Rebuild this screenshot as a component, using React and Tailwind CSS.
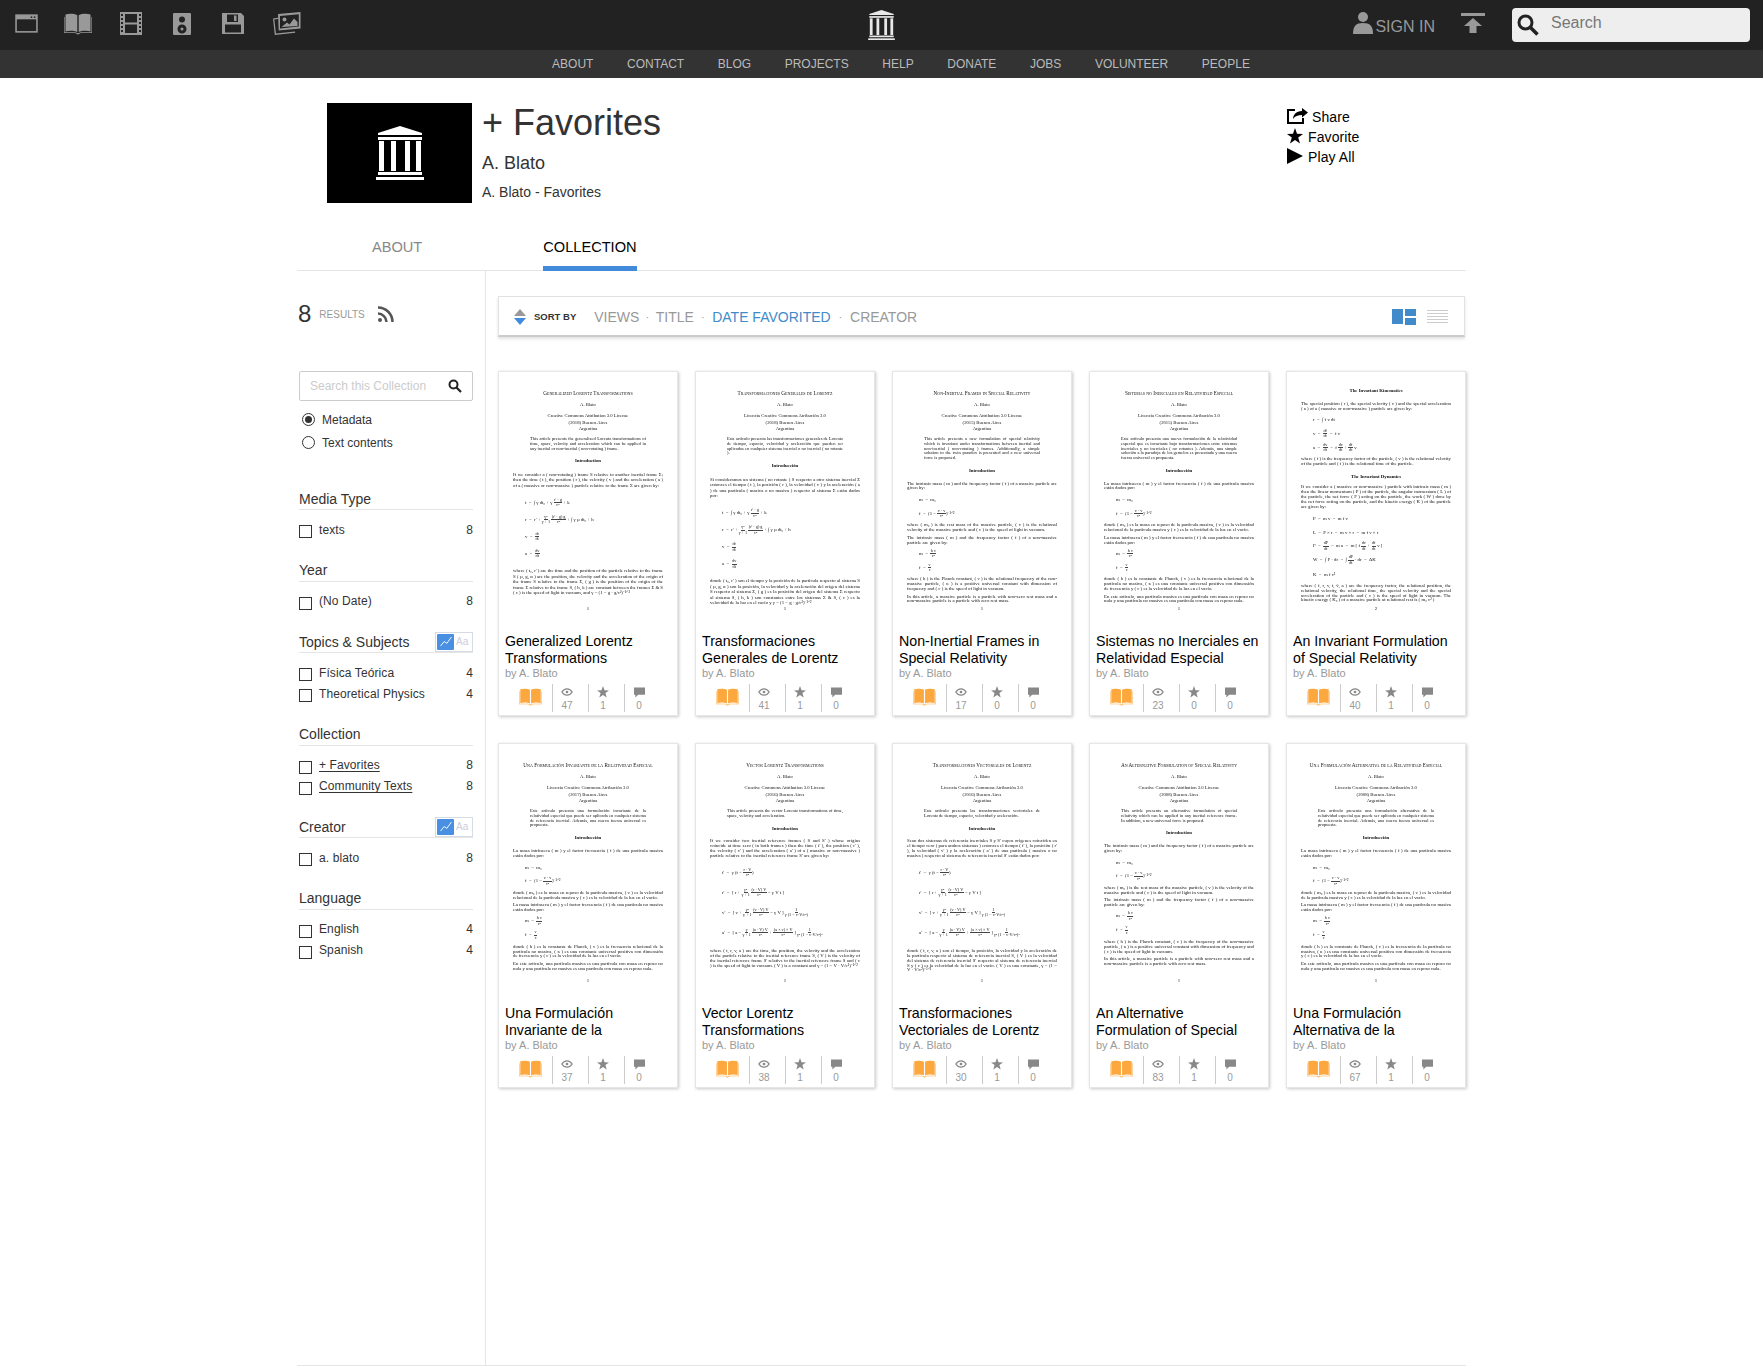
const NAV = ['ABOUT', 'CONTACT', 'BLOG', 'PROJECTS', 'HELP', 'DONATE', 'JOBS', 'VOLUNTEER', 'PEOPLE']

function Temple({ className }) {
  return (
    <svg viewBox="0 0 48 54" className={className} fill="currentColor">
      <polygon points="24,0 46,7 46,9 2,9 2,7" />
      <rect x="2" y="11" width="44" height="3" />
      <rect x="3" y="15" width="5" height="30" />
      <rect x="15" y="15" width="5" height="30" />
      <rect x="29" y="15" width="5" height="30" />
      <rect x="40" y="15" width="5" height="30" />
      <rect x="2" y="46" width="44" height="3" />
      <rect x="0" y="51" width="48" height="3" />
    </svg>
  )
}

function BookIcon({ className }) {
  return (
    <svg viewBox="0 0 28 22" className={className} fill="currentColor">
      <path d="M1.5 1.5C5 .5 10 .5 13.3 2.2V19C10 17.4 5 17.4 1.5 18.4Z" />
      <path d="M26.5 1.5C23 .5 18 .5 14.7 2.2V19C18 17.4 23 17.4 26.5 18.4Z" />
      <path d="M0 4v16h11c1 0 2 1.6 3 1.6s2-1.6 3-1.6h11V4h-.6v15.2H17c-1.2 0-2 1-3 1s-1.8-1-3-1H.6V4Z" />
    </svg>
  )
}

function MediaIcons() {
  return (
    <div className="flex items-center text-[#999]">
      <svg viewBox="0 0 22 18" className="ml-[15px] h-[19px] w-[23px]" fill="none" stroke="currentColor">
        <rect x="1" y="1" width="20" height="16" strokeWidth="1.5" />
        <rect x="1" y="1" width="20" height="4" fill="currentColor" stroke="none" />
        <rect x="15" y="2.2" width="1.5" height="1.5" fill="#222" stroke="none" />
        <rect x="18" y="2.2" width="1.5" height="1.5" fill="#222" stroke="none" />
      </svg>
      <BookIcon className="ml-[26px] h-[22px] w-[28px]" />
      <svg viewBox="0 0 22 23" className="ml-[28px] h-[23px] w-[22px]" fill="currentColor">
        <path fillRule="evenodd" d="M0 0h22v23H0ZM5 2v8.5h12V2ZM5 12.5V21h12v-8.5ZM1 2v2h2V2Zm0 4v2h2V6Zm0 4v2h2v-2Zm0 4v2h2v-2Zm0 4v2h2v-2Zm18-16v2h2V2Zm0 4v2h2V6Zm0 4v2h2v-2Zm0 4v2h2v-2Zm0 4v2h2v-2Z" />
      </svg>
      <svg viewBox="0 0 18 22" className="ml-[31px] h-[22px] w-[18px]" fill="currentColor">
        <path fillRule="evenodd" d="M1 0h16a1 1 0 0 1 1 1v20a1 1 0 0 1-1 1H1a1 1 0 0 1-1-1V1a1 1 0 0 1 1-1Zm8 3.5a3 3 0 1 0 0 6 3 3 0 0 0 0-6Zm0 8a4.5 4.5 0 1 0 0 9 4.5 4.5 0 0 0 0-9Zm0 3a1.5 1.5 0 1 1 0 3 1.5 1.5 0 0 1 0-3Z" />
      </svg>
      <svg viewBox="0 0 22 21" className="ml-[31px] h-[21px] w-[22px]" fill="currentColor">
        <path fillRule="evenodd" d="M0 0h19l3 3v18H0ZM5 1.5V9h11V1.5ZM12 2.5h2.5V8H12ZM3 11.5V19.5h16v-8Z" />
      </svg>
      <svg viewBox="0 0 28 23" className="ml-[29px] h-[23px] w-[28px]" fill="currentColor">
        <path d="M0 6.5 5 5.8V7L1.3 7.6 3 21.4l19-1.900.2 1.300L1.8 23Z" />
        <path fillRule="evenodd" d="M5 2 27.5 0v16.500L5.7 18.500ZM7 4v12.500l18.800-1.900V2.200Z" />
        <circle cx="11.5" cy="7.5" r="2" />
        <path d="M8.5 15 14 10.500 16.500 12.500 21 6.500 24.500 10v4Z" />
      </svg>
    </div>
  )
}

function Header() {
  return (
    <header>
      <div className="relative flex h-[50px] items-start bg-[#222]">
        <div className="pt-[12px]">
          <MediaIcons />
        </div>
        <div className="absolute left-[868px] top-[10px] text-[#e8e8e8]">
          <Temple className="h-[30px] w-[27px]" />
        </div>
        <div className="ml-auto flex items-start">
          <a className="mt-[12px] flex items-end text-[16px] leading-[20px] text-[#999]">
            <svg viewBox="0 0 20 22" className="h-[22px] w-[20px]" fill="currentColor">
              <circle cx="10" cy="5" r="5" />
              <path d="M0 22c0-8 3-11 10-11s10 3 10 11Z" />
            </svg>
            <span className="-mb-[2px] ml-[2px] leading-[18px]">SIGN IN</span>
          </a>
          <svg viewBox="0 0 24 20" className="ml-[26px] mt-[13px] h-[20px] w-[24px] text-[#999]" fill="currentColor">
            <rect width="24" height="3" />
            <path d="M12 5 21 13h-5.5v7h-7v-7H3Z" />
          </svg>
          <div className="ml-[27px] mr-[13px] mt-[8px] flex h-[34px] w-[238px] items-start rounded-[4px] bg-[#eee]">
            <svg viewBox="0 0 22 22" className="ml-[5px] mt-[6px] h-[22px] w-[22px] text-[#222]" fill="none" stroke="currentColor">
              <circle cx="8.5" cy="8.5" r="6.5" strokeWidth="3" />
              <path d="M13.5 13.5 20.5 20.5" strokeWidth="3.5" />
            </svg>
            <span className="ml-[12px] mt-[5px] text-[16px] leading-[20px] text-[#777]">Search</span>
          </div>
        </div>
      </div>
      <nav className="flex h-[28px] items-center justify-center gap-[33.6px] bg-[#333] pl-[39px] text-[12px] text-[#bbb]">
        {NAV.map((n) => (
          <a key={n}>{n}</a>
        ))}
      </nav>
    </header>
  )
}

function CollectionHead() {
  return (
    <section className="mx-[297px] mt-[25px] flex h-[100px]">
      <div className="ml-[30px] flex h-[100px] w-[145px] items-center justify-center bg-black text-white">
        <Temple className="h-[54px] w-[48px]" />
      </div>
      <div className="ml-[11px] w-[804px] text-[#333]">
        <h1 className="-ml-[1px] text-[36px] leading-[40px]">+ Favorites</h1>
        <p className="-ml-[1px] mt-[10px] text-[18px] leading-[20px]">A. Blato</p>
        <p className="-ml-[1px] mt-[10px] text-[14px] leading-[18px]">A. Blato - Favorites</p>
      </div>
      <div className="pt-[4px] text-[14px] leading-[20px] tracking-[0.1px] text-black">
        <div className="flex items-center">
          <svg viewBox="0 0 21 16" className="-mt-[3px] h-[16px] w-[21px]" fill="none" stroke="currentColor">
            <path d="M8 2H1v13h15v-5" strokeWidth="2" />
            <path d="M21 4.5 15 0v3C9 3 6 7 6 11c2-3 5-4 9-4v2.5Z" fill="currentColor" stroke="none" />
          </svg>
          <span className="ml-[4px]">Share</span>
        </div>
        <div className="flex items-center">
          <svg viewBox="0 0 16 16" className="-mt-[2px] h-[16px] w-[16px]" fill="currentColor">
            <polygon points="8,0 10,5.7 16,5.9 11.2,9.5 13,15.5 8,12 3,15.5 4.8,9.5 0,5.9 6,5.7" />
          </svg>
          <span className="ml-[5px]">Favorite</span>
        </div>
        <div className="flex items-center">
          <svg viewBox="0 0 16 16" className="-mt-[2px] h-[16px] w-[16px]" fill="currentColor">
            <polygon points="0,0 16,8 0,16" />
          </svg>
          <span className="ml-[5px]">Play All</span>
        </div>
      </div>
    </section>
  )
}

function Tabs() {
  return (
    <div className="mx-[297px] mt-[3px] flex h-[65px] items-end border-b border-[#e5e5e5]">
      <a className="ml-[75px] h-[33px] text-[14.6px] leading-[20px] text-[#888]">ABOUT</a>
      <a className="-mb-[1px] ml-[121px] h-[34px] border-b-[5px] border-[#428bdc] text-[14.6px] leading-[20px] text-black">
        COLLECTION
      </a>
    </div>
  )
}

function ChartToggle() {
  return (
    <div className="flex h-[20px] w-[38px] items-center border border-[#d5dce3] p-[1px]">
      <div className="flex h-[16px] w-[17px] items-center justify-center rounded-[1px] bg-[#4a90e2]">
        <svg viewBox="0 0 14 12" className="h-[11px] w-[14px]" fill="none" stroke="white" strokeWidth="1">
          <path d="M1 11 5 6 8 8 13 1" />
        </svg>
      </div>
      <span className="ml-[2px] text-[10px] text-[#ccd]">Aa</span>
    </div>
  )
}

const FACETS = [
  { name: 'Media Type', rows: [['texts', 8]] },
  { name: 'Year', rows: [['(No Date)', 8]] },
  { name: 'Topics & Subjects', toggle: true, rows: [['Física Teórica', 4], ['Theoretical Physics', 4]] },
  { name: 'Collection', link: true, rows: [['+ Favorites', 8], ['Community Texts', 8]] },
  { name: 'Creator', toggle: true, rows: [['a. blato', 8]] },
  { name: 'Language', rows: [['English', 4], ['Spanish', 4]] },
]

function Facet({ name, toggle, link, rows }) {
  return (
    <div className="mb-[19.5px]">
      <div className="flex h-[22px] items-center justify-between border-b border-[#e5e5e5] text-[14px] text-[#333]">
        <span className="pt-[1px]">{name}</span>
        {toggle && <ChartToggle />}
      </div>
      <ul className="pt-[9px] text-[12px] tracking-[0.1px] text-[#333]">
        {rows.map(([label, count]) => (
          <li key={label} className="flex h-[21px] items-center">
            <span className="mr-[7px] mt-[4px] h-[13px] w-[13px] border border-[#333]" />
            <span className={link ? 'underline underline-offset-2' : ''}>{label}</span>
            <span className="ml-auto">{count}</span>
          </li>
        ))}
      </ul>
    </div>
  )
}

function Sidebar() {
  return (
    <aside className="w-[189px] shrink-0 border-r border-[#e5e5e5] pl-[2px] pr-[12px]">
      <div className="mt-[29px] flex h-[28px] items-center text-[#333]">
        <span className="-ml-[1px] text-[24px]">8</span>
        <span className="ml-[8px] mt-[1px] text-[10px] text-[#999]">RESULTS</span>
        <svg viewBox="0 0 16 16" className="ml-[13px] h-[16px] w-[16px] text-[#555]" fill="none" stroke="currentColor" strokeWidth="2.5">
          <path d="M0 1.5C8 1.5 14.5 8 14.5 16" />
          <path d="M0 7.5C4.5 7.5 8.5 11.5 8.5 16" />
          <circle cx="2" cy="14" r="2" fill="currentColor" stroke="none" />
        </svg>
      </div>
      <div className="mt-[43px] flex h-[30px] items-center rounded-[2px] border border-[#ccc] px-[10px] text-[12px] text-[#ccc]">
        <span>Search this Collection</span>
        <svg viewBox="0 0 14 14" className="ml-auto h-[14px] w-[14px] text-[#222]" fill="none" stroke="currentColor">
          <circle cx="5.5" cy="5.5" r="4" strokeWidth="2" />
          <path d="M8.5 8.5 13 13" strokeWidth="2.2" />
        </svg>
      </div>
      <div className="mt-[7px] text-[12px] text-[#333]">
        <label className="flex h-[23px] items-center">
          <span className="ml-[3px] mr-[7px] flex h-[13px] w-[13px] items-center justify-center rounded-full border border-[#333]">
            <span className="h-[7px] w-[7px] rounded-full bg-[#333]" />
          </span>
          Metadata
        </label>
        <label className="flex h-[23px] items-center">
          <span className="ml-[3px] mr-[7px] h-[13px] w-[13px] rounded-full border border-[#333]" />
          Text contents
        </label>
      </div>
      <div className="mt-[34px]">
        {FACETS.map((f) => (
          <Facet key={f.name} {...f} />
        ))}
      </div>
    </aside>
  )
}

function SortBar() {
  return (
    <div className="mr-[1px] flex h-[41px] items-center border border-b-2 border-[#e2e2e2] border-b-[#ccc] pt-[2px] shadow-[0_2px_3px_rgba(0,0,0,0.12)]">
      <svg viewBox="0 0 12 16" className="ml-[15px] h-[16px] w-[12px]">
        <polygon points="6,0 12,7 0,7" fill="#999" />
        <polygon points="0,9 12,9 6,16" fill="#428bdc" />
      </svg>
      <span className="ml-[8px] text-[9.5px] font-bold text-[#333]">SORT BY</span>
      <div className="ml-[18px] flex items-center text-[14px] text-[#999]">
        <span>VIEWS</span>
        <span className="mx-[6.5px] text-[10px]">·</span>
        <span>TITLE</span>
        <span className="mx-[7.5px] text-[10px]">·</span>
        <span className="text-[#428bca]">DATE FAVORITED</span>
        <span className="mx-[8px] text-[10px]">·</span>
        <span>CREATOR</span>
      </div>
      <svg viewBox="0 0 24 16" className="ml-auto h-[16px] w-[24px]" fill="#428bca">
        <rect width="11" height="15" y="0" />
        <rect x="13" width="11" height="7" y="0" />
        <rect x="13" width="11" height="7" y="9" />
      </svg>
      <svg viewBox="0 0 21 14" className="ml-[11px] mr-[16px] h-[14px] w-[21px]" fill="#ccc">
        <rect width="21" height="1" y="0" />
        <rect width="21" height="1" y="3" />
        <rect width="21" height="1" y="6" />
        <rect width="21" height="1" y="9" />
        <rect width="21" height="1" y="12" />
      </svg>
    </div>
  )
}

// Front matter shared by most of the papers
const front = (title, license, year, abstract, heading = 'Introduction') => [
  ['t', title],
  ['au', 'A. Blato'],
  ['m0', license],
  ['m', year],
  ['m', 'Argentina'],
  ['a', abstract],
  ['h', heading],
]

const EN = 'Creative Commons Attribution 3.0 License'
const ES = 'Licencia Creative Commons Atribución 3.0'
const f = (n, d) => ({ n, d })

const massEqs = [
  ['e', ['m  =  m₀']],
  ['e', ['f  =  (1 − ', f('v · v', 'c²'), ')⁻¹ᐟ²']],
]
const photonEqs = [
  ['e', ['m  =  ', f('h ν', 'c²')]],
  ['e', ['f  =  ', f('ν', 'c')]],
]

const vectorEqs = [
  ['g'],
  ['E', ["t'  =  γ (t − ", f('r · V', 'c²'), ')']],
  ['E', ["r'  =  [ r + ", f('γ²', 'γ + 1'), ' ', f('(r · V) V', 'c²'), ' − γ V t ]']],
  ['E', ["v'  =  [ v + ", f('γ²', 'γ + 1'), ' ', f('(v · V) V', 'c²'), ' − γ V ] ', f('1', 'γ (1 − v·V/c²)')]],
  ['E', ["a'  =  [ a − ", f('γ', 'γ + 1'), ' ', f('(a · V) V', 'c²'), ' + ', f('(a × v) × V', 'c²'), ' ] ', f('1', 'γ² (1 − v·V/c²)³')]],
  ['g4'],
]

const lorentzEqs = [
  ['E2', ['t  =  ∫ γ dt₀ + γ ', f("r' · g", 'c²'), ' + k']],
  ['E2', ["r  =  r' + ", f('γ²', 'γ + 1'), ' ', f("(r' · g) g", 'c²'), ' + ∫ γ µ dt₀ + h']],
  ['E2', ['v  =  ', f('dr', 'dt')]],
  ['E2', ['a  =  ', f('dv', 'dt')]],
]

const DOCS = [
  [
    ...front(
      'Generalized Lorentz Transformations',
      EN,
      '(2018) Buenos Aires',
      'This article presents the generalized Lorentz transformations of time, space, velocity and acceleration which can be applied in any inertial or non-inertial ( non-rotating ) frame.',
    ),
    ['P', 'If we consider a ( non-rotating ) frame S relative to another inertial frame Σ; then the time ( t ), the position ( r ), the velocity ( v ) and the acceleration ( a ) of a ( massive or non-massive ) particle relative to the frame Σ are given by:'],
    ...lorentzEqs,
    ['Q', "where ( t₀, r' ) are the time and the position of the particle relative to the frame S ( µ, g, α ) are the position, the velocity and the acceleration of the origin of the frame S relative to the frame Σ, ( g ) is the position of the origin of the frame Σ relative to the frame S, ( h, k ) are constant between the frames Σ & S ( c ) is the speed of light in vacuum, and γ = (1 − g · g/c²)⁻¹ᐟ²"],
    ['n', '1'],
  ],
  [
    ...front(
      'Transformaciones Generales de Lorentz',
      ES,
      '(2018) Buenos Aires',
      'Este artículo presenta las transformaciones generales de Lorentz de tiempo, espacio, velocidad y aceleración que pueden ser aplicadas en cualquier sistema inercial o no inercial ( no rotante ).',
      'Introducción',
    ),
    ['P', 'Si consideramos un sistema ( no rotante ) S respecto a otro sistema inercial Σ entonces el tiempo ( t ), la posición ( r ), la velocidad ( v ) y la aceleración ( a ) de una partícula ( masiva o no masiva ) respecto al sistema Σ están dados por:'],
    ...lorentzEqs,
    ['Q', "donde ( t₀, r' ) son el tiempo y la posición de la partícula respecto al sistema S ( µ, g, α ) son la posición, la velocidad y la aceleración del origen del sistema S respecto al sistema Σ, ( g ) es la posición del origen del sistema Σ respecto al sistema S, ( h, k ) son constantes entre los sistemas Σ & S, ( c ) es la velocidad de la luz en el vacío y γ = (1 − g · g/c²)⁻¹ᐟ²"],
    ['n', '1'],
  ],
  [
    ...front(
      'Non-Inertial Frames in Special Relativity',
      EN,
      '(2015) Buenos Aires',
      'This article presents a new formulation of special relativity which is invariant under transformations between inertial and non-inertial ( non-rotating ) frames. Additionally, a simple solution to the twin paradox is presented and a new universal force is proposed.',
    ),
    ['p', 'The intrinsic mass ( m ) and the frequency factor ( f ) of a massive particle are given by:'],
    ...massEqs,
    ['p', 'where ( m₀ ) is the rest mass of the massive particle, ( v ) is the relational velocity of the massive particle and ( c ) is the speed of light in vacuum.'],
    ['q', 'The intrinsic mass ( m ) and the frequency factor ( f ) of a non-massive particle are given by:'],
    ...photonEqs,
    ['p', 'where ( h ) is the Planck constant, ( ν ) is the relational frequency of the non-massive particle, ( κ ) is a positive universal constant with dimension of frequency and ( c ) is the speed of light in vacuum.'],
    ['q', 'In this article, a massive particle is a particle with non-zero rest mass and a non-massive particle is a particle with zero rest mass.'],
    ['n', '1'],
  ],
  [
    ...front(
      'Sistemas no Inerciales en Relatividad Especial',
      ES,
      '(2015) Buenos Aires',
      'Este artículo presenta una nueva formulación de la relatividad especial que es invariante bajo transformaciones entre sistemas inerciales y no inerciales ( no rotantes ). Además, una simple solución a la paradoja de los gemelos es presentada y una nueva fuerza universal es propuesta.',
      'Introducción',
    ),
    ['p', 'La masa intrínseca ( m ) y el factor frecuencia ( f ) de una partícula masiva están dados por:'],
    ...massEqs,
    ['p', 'donde ( m₀ ) es la masa en reposo de la partícula masiva, ( v ) es la velocidad relacional de la partícula masiva y ( c ) es la velocidad de la luz en el vacío.'],
    ['q', 'La masa intrínseca ( m ) y el factor frecuencia ( f ) de una partícula no masiva están dados por:'],
    ...photonEqs,
    ['p', 'donde ( h ) es la constante de Planck, ( ν ) es la frecuencia relacional de la partícula no masiva, ( κ ) es una constante universal positiva con dimensión de frecuencia y ( c ) es la velocidad de la luz en el vacío.'],
    ['q', 'En este artículo, una partícula masiva es una partícula con masa en reposo no nula y una partícula no masiva es una partícula con masa en reposo nula.'],
    ['n', '1'],
  ],
  [
    ['h0', 'The Invariant Kinematics'],
    ['p', 'The special position ( r̄ ), the special velocity ( v̄ ) and the special acceleration ( ā ) of a ( massive or non-massive ) particle are given by:'],
    ['e', ['r̄  =  ∫ f v dt']],
    ['e', ['v̄  =  ', f('dr̄', 'dt'), '  =  f v']],
    ['e', ['ā  =  ', f('dv̄', 'dt'), '  =  f ', f('dv', 'dt'), ' + ', f('df', 'dt'), ' v']],
    ['p', 'where ( f ) is the frequency factor of the particle, ( v ) is the relational velocity of the particle and ( t ) is the relational time of the particle.'],
    ['h1', 'The Invariant Dynamics'],
    ['p', 'If we consider a ( massive or non-massive ) particle with intrinsic mass ( m ) then the linear momentum ( P ) of the particle, the angular momentum ( L ) of the particle, the net force ( F ) acting on the particle, the work ( W ) done by the net force acting on the particle, and the kinetic energy ( K ) of the particle are given by:'],
    ['e', ['P  =  m v̄  =  m f v']],
    ['e', ['L  =  P × r  =  m v̄ × r  =  m f v × r']],
    ['e', ['F  =  ', f('dP', 'dt'), '  =  m ā  =  m [ f ', f('dv', 'dt'), ' + ', f('df', 'dt'), ' v ]']],
    ['e', ['W  =  ∫ F · dr  =  ∫ ', f('dP', 'dt'), ' · dr  =  ΔK']],
    ['e', ['K  =  m f c²']],
    ['p', 'where ( f, r, v, t, v̄, ā ) are the frequency factor, the relational position, the relational velocity, the relational time, the special velocity and the special acceleration of the particle and ( c ) is the speed of light in vacuum. The kinetic energy ( K₀ ) of a massive particle at relational rest is ( m₀ c² )'],
    ['n', '2'],
  ],
  [
    ...front(
      'Una Formulación Invariante de la Relatividad Especial',
      ES,
      '(2017) Buenos Aires',
      'Este artículo presenta una formulación invariante de la relatividad especial que puede ser aplicada en cualquier sistema de referencia inercial. Además, una nueva fuerza universal es propuesta.',
      'Introducción',
    ),
    ['p', 'La masa intrínseca ( m ) y el factor frecuencia ( f ) de una partícula masiva están dados por:'],
    ...massEqs,
    ['p', 'donde ( m₀ ) es la masa en reposo de la partícula masiva, ( v ) es la velocidad relacional de la partícula masiva y ( c ) es la velocidad de la luz en el vacío.'],
    ['q', 'La masa intrínseca ( m ) y el factor frecuencia ( f ) de una partícula no masiva están dados por:'],
    ...photonEqs,
    ['p', 'donde ( h ) es la constante de Planck, ( ν ) es la frecuencia relacional de la partícula no masiva, ( κ ) es una constante universal positiva con dimensión de frecuencia y ( c ) es la velocidad de la luz en el vacío.'],
    ['q', 'En este artículo, una partícula masiva es una partícula con masa en reposo no nula y una partícula no masiva es una partícula con masa en reposo nula.'],
    ['n', '1'],
  ],
  [
    ...front(
      'Vector Lorentz Transformations',
      EN,
      '(2016) Buenos Aires',
      'This article presents the vector Lorentz transformations of time, space, velocity and acceleration.',
    ),
    ['p', "If we consider two inertial reference frames ( S and S' ) whose origins coincide at time zero ( in both frames ) then the time ( t' ), the position ( r' ), the velocity ( v' ) and the acceleration ( a' ) of a ( massive or non-massive ) particle relative to the inertial reference frame S' are given by:"],
    ...vectorEqs,
    ['p', "where ( t, r, v, a ) are the time, the position, the velocity and the acceleration of the particle relative to the inertial reference frame S, ( V ) is the velocity of the inertial reference frame S' relative to the inertial reference frame S and ( c ) is the speed of light in vacuum. ( V ) is a constant and γ = (1 − V · V/c²)⁻¹ᐟ²"],
    ['n', '1'],
  ],
  [
    ...front(
      'Transformaciones Vectoriales de Lorentz',
      ES,
      '(2016) Buenos Aires',
      'Este artículo presenta las transformaciones vectoriales de Lorentz de tiempo, espacio, velocidad y aceleración.',
      'Introducción',
    ),
    ['p', "Sean dos sistemas de referencia inerciales S y S' cuyos orígenes coinciden en el tiempo cero ( para ambos sistemas ) entonces el tiempo ( t' ), la posición ( r' ), la velocidad ( v' ) y la aceleración ( a' ) de una partícula ( masiva o no masiva ) respecto al sistema de referencia inercial S' están dados por:"],
    ...vectorEqs,
    ['p', "donde ( t, r, v, a ) son el tiempo, la posición, la velocidad y la aceleración de la partícula respecto al sistema de referencia inercial S, ( V ) es la velocidad del sistema de referencia inercial S' respecto al sistema de referencia inercial S y ( c ) es la velocidad de la luz en el vacío. ( V ) es una constante, γ = (1 − V · V/c²)⁻¹ᐟ²"],
    ['n', '1'],
  ],
  [
    ...front(
      'An Alternative Formulation of Special Relativity',
      EN,
      '(2008) Buenos Aires',
      'This article presents an alternative formulation of special relativity which can be applied in any inertial reference frame. In addition, a new universal force is proposed.',
    ),
    ['p', 'The intrinsic mass ( m ) and the frequency factor ( f ) of a massive particle are given by:'],
    ...massEqs,
    ['p', 'where ( m₀ ) is the rest mass of the massive particle, ( v ) is the velocity of the massive particle and ( c ) is the speed of light in vacuum.'],
    ['q', 'The intrinsic mass ( m ) and the frequency factor ( f ) of a non-massive particle are given by:'],
    ...photonEqs,
    ['p', 'where ( h ) is the Planck constant, ( ν ) is the frequency of the non-massive particle, ( κ ) is a positive universal constant with dimension of frequency and ( c ) is the speed of light in vacuum.'],
    ['q', 'In this article, a massive particle is a particle with non-zero rest mass and a non-massive particle is a particle with zero rest mass.'],
    ['n', '1'],
  ],
  [
    ...front(
      'Una Formulación Alternativa de la Relatividad Especial',
      ES,
      '(2008) Buenos Aires',
      'Este artículo presenta una formulación alternativa de la relatividad especial que puede ser aplicada en cualquier sistema de referencia inercial. Además, una nueva fuerza universal es propuesta.',
      'Introducción',
    ),
    ['p', 'La masa intrínseca ( m ) y el factor frecuencia ( f ) de una partícula masiva están dados por:'],
    ...massEqs,
    ['p', 'donde ( m₀ ) es la masa en reposo de la partícula masiva, ( v ) es la velocidad de la partícula masiva y ( c ) es la velocidad de la luz en el vacío.'],
    ['q', 'La masa intrínseca ( m ) y el factor frecuencia ( f ) de una partícula no masiva están dados por:'],
    ...photonEqs,
    ['p', 'donde ( h ) es la constante de Planck, ( ν ) es la frecuencia de la partícula no masiva, ( κ ) es una constante universal positiva con dimensión de frecuencia y ( c ) es la velocidad de la luz en el vacío.'],
    ['q', 'En este artículo, una partícula masiva es una partícula con masa en reposo no nula y una partícula no masiva es una partícula con masa en reposo nula.'],
    ['n', '1'],
  ],
]

const BLOCK = {
  t: 'mt-[18px] text-center text-[5.2px] leading-[6px] whitespace-nowrap [font-variant-caps:small-caps]',
  au: 'mt-[6px] text-center text-[4.7px] leading-[6px]',
  m0: 'mt-[5px] text-center text-[4.7px] leading-[6px]',
  m: 'mt-[0.5px] text-center text-[4.7px] leading-[6px]',
  a: 'mt-[5px] px-[17px] text-justify text-[4.5px] leading-[4.8px]',
  h: 'mb-[3.6px] mt-[7px] text-center font-bold leading-[6px]',
  h0: 'mb-[3.6px] mt-[16px] text-center font-bold leading-[6px]',
  h1: 'mb-[1px] mt-[7px] text-center font-bold leading-[6px]',
  p: 'mt-[4px] text-justify leading-[4.9px]',
  q: 'mt-[2.4px] text-justify leading-[4.9px]',
  P: 'mb-[6px] mt-[4px] text-justify leading-[5.5px]',
  Q: 'mt-[6px] text-justify leading-[5.5px]',
  e: 'mt-[3px] flex h-[11px] items-center pl-[12px]',
  E: 'mt-[3.5px] flex h-[16.5px] items-center pl-[12px]',
  E2: 'flex h-[17px] items-center pl-[12px]',
  g: 'h-[2px]',
  g4: 'h-[4px]',
  n: 'mb-[21px] mt-auto text-center leading-[6px]',
}

function Equation({ parts }) {
  return (
    <span className="whitespace-pre">
      {parts.map((p, i) =>
        typeof p === 'string' ? (
          <span key={i}>{p}</span>
        ) : (
          <span key={i} className="inline-flex flex-col items-center align-middle text-[4.2px] leading-[4.5px]">
            <span className="border-b-[0.5px] border-[#444] px-[0.5px]">{p.n}</span>
            <span>{p.d}</span>
          </span>
        ),
      )}
    </span>
  )
}

function Paper({ blocks }) {
  return (
    <div className="flex h-[261px] flex-col overflow-hidden px-[14px] font-['Liberation_Serif',serif] text-[4.8px] text-[#111] blur-[0.25px]">
      {blocks.map(([kind, body], i) => (
        <div key={i} className={BLOCK[kind]}>
          {Array.isArray(body) ? <Equation parts={body} /> : body}
        </div>
      ))}
    </div>
  )
}

function Stat({ icon, value }) {
  return (
    <div className="flex h-[28px] w-[36px] flex-col items-center border-l border-[#ccc] pr-[7px] text-[10px] leading-[12px] text-[#999]">
      <div className="flex h-[16px] items-center">{icon}</div>
      {value}
    </div>
  )
}

const ITEMS = [
  ['Generalized Lorentz Transformations', 47, 1],
  ['Transformaciones Generales de Lorentz', 41, 1],
  ['Non-Inertial Frames in Special Relativity', 17, 0],
  ['Sistemas no Inerciales en Relatividad Especial', 23, 0],
  ['An Invariant Formulation of Special Relativity', 40, 1],
  ['Una Formulación Invariante de la Relatividad Especial', 37, 1],
  ['Vector Lorentz Transformations', 38, 1],
  ['Transformaciones Vectoriales de Lorentz', 30, 1],
  ['An Alternative Formulation of Special Relativity', 83, 1],
  ['Una Formulación Alternativa de la Relatividad Especial', 67, 1],
]

function Card({ title, views, favs, doc }) {
  return (
    <article className="h-[345px] w-[180px] border border-[#e6e6e6] shadow-[1px_1px_3px_rgba(0,0,0,0.22)]">
      <Paper blocks={doc} />
      <h3 className="ml-[6px] h-[34px] w-[166px] overflow-hidden text-[14.2px] leading-[17px] text-black">{title}</h3>
      <p className="ml-[6px] text-[11px] leading-[13px] text-[#999]">by A. Blato</p>
      <div className="mt-[4px] flex">
        <div className="flex h-[28px] w-[53px] items-start pl-[20px] pt-[4px] text-[#fca83e]">
          <BookIcon className="h-[18px] w-[23px]" />
        </div>
        <Stat
          value={views}
          icon={
            <svg viewBox="0 0 14 10" className="h-[10px] w-[12px] text-[#888]" fill="none" stroke="currentColor" strokeWidth="1.5">
              <path d="M1 5c3-5 9-5 12 0-3 5-9 5-12 0Z" />
              <circle cx="7" cy="5" r="1.6" fill="currentColor" stroke="none" />
            </svg>
          }
        />
        <Stat
          value={favs}
          icon={
            <svg viewBox="0 0 12 12" className="h-[12px] w-[12px] text-[#888]" fill="currentColor">
              <polygon points="6,0 7.5,4.3 12,4.4 8.4,7.1 9.7,11.5 6,9 2.3,11.5 3.6,7.1 0,4.4 4.5,4.3" />
            </svg>
          }
        />
        <Stat
          value={0}
          icon={
            <svg viewBox="0 0 12 11" className="h-[11px] w-[11px] text-[#888]" fill="currentColor">
              <path d="M0 0h12v8H4.5L1.5 11V8H0Z" />
            </svg>
          }
        />
      </div>
    </article>
  )
}

export default function App() {
  return (
    <div className="min-h-[1366px] bg-white font-['Liberation_Sans',Arial,sans-serif]">
      <Header />
      <CollectionHead />
      <Tabs />
      <main className="mx-[297px] flex h-[1095px] border-b border-[#e5e5e5]">
        <Sidebar />
        <div className="flex-1 pl-[12px] pt-[25px]">
          <SortBar />
          <div className="mt-[34px] flex flex-wrap gap-x-[17px] gap-y-[27px]">
            {ITEMS.map(([title, views, favs], i) => (
              <Card key={title} title={title} views={views} favs={favs} doc={DOCS[i]} />
            ))}
          </div>
        </div>
      </main>
    </div>
  )
}
